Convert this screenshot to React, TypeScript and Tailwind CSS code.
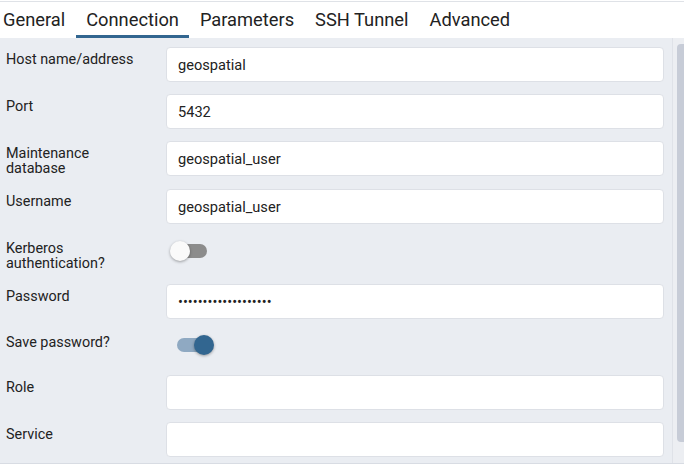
import React from "react";

const tabs = ["General", "Connection", "Parameters", "SSH Tunnel", "Advanced"];

function Toggle({ on, className }: { on: boolean; className?: string }) {
  return (
    <div className={`relative h-[38px] w-[58px] shrink-0 ${className ?? ""}`}>
      <div
        className={`absolute left-[12px] top-[12px] h-[14px] w-[34px] rounded-full ${
          on ? "bg-[#8fa9c2]" : "bg-[#8c8c8c]"
        }`}
      />
      <div
        className={`absolute top-[9px] h-[20px] w-[20px] rounded-full shadow-[0_1px_3px_rgba(0,0,0,0.35)] ${
          on ? "left-[29px] bg-[#326690]" : "left-[9px] bg-[#fafafa]"
        }`}
      />
    </div>
  );
}

function TextRow({
  label,
  value,
  type = "text",
  className,
}: {
  label: React.ReactNode;
  value: string;
  type?: string;
  className?: string;
}) {
  return (
    <div className={`grid grid-cols-[160px_1fr] ${className ?? ""}`}>
      <label className="pt-[6px] text-[14.4px] leading-[14.5px] text-[#222]">
        {label}
      </label>
      <input
        type={type}
        readOnly
        value={value}
        className="h-[35px] w-full rounded-[4px] border border-[#dde0e6] bg-white px-[11px] text-[14.6px] text-[#222] outline-none"
      />
    </div>
  );
}

export default function App() {
  return (
    <div className="flex h-[464px] w-[684px] flex-col overflow-hidden bg-white font-[Roboto,sans-serif]">
      <div className="mt-[1px] flex h-[37px] border-t border-[#dfe2e7] bg-white">
        {tabs.map((tab, i) => (
          <div
            key={tab}
            className={`flex h-full items-center text-[18.3px] text-[#222] ${
              i === 0 ? "pl-[3px] pr-[10.5px]" : "px-[10.5px]"
            } ${i === 1 ? "border-b-[3px] border-[#326690] pt-[3px]" : ""}`}
          >
            {tab}
          </div>
        ))}
      </div>

      <div className="flex min-h-0 flex-1 border-b border-[#d8dce3] bg-[#eaedf2]">
        <div className="flex-1 pl-[6px] pr-[8px] pt-[9px]">
          <TextRow label="Host name/address" value="geospatial" className="mb-3" />
          <TextRow label="Port" value="5432" className="mb-3" />
          <TextRow
            label={
              <>
                Maintenance
                <br />
                database
              </>
            }
            value="geospatial_user"
            className="mb-[13px]"
          />
          <TextRow label="Username" value="geospatial_user" className="mb-3" />

          <div className="mb-3 grid h-[36px] grid-cols-[160px_1fr]">
            <div className="pt-[6px] text-[14.4px] leading-[14.5px] text-[#222]">
              Kerberos
              <br />
              authentication?
            </div>
            <Toggle on={false} className="-ml-[5px] -mt-[4px]" />
          </div>

          <TextRow
            label="Password"
            value="•••••••••••••••••••"
            type="password"
            className="mb-3"
          />

          <div className="mb-3 grid h-[32px] grid-cols-[160px_1fr]">
            <div className="pt-[5px] text-[14.4px] leading-[14.5px] text-[#222]">
              Save password?
            </div>
            <Toggle on className="-ml-[1px] -mt-[5px]" />
          </div>

          <TextRow label="Role" value="" className="mb-3" />
          <TextRow label="Service" value="" />
        </div>

        <div className="w-[12px] shrink-0 border-l border-[#dfe2e8] bg-[#eceef2] pt-[6px]">
          <div className="ml-[4px] h-[398px] w-[8px] rounded-l-[4px] bg-[#c7ccd7]" />
        </div>
      </div>
    </div>
  );
}
